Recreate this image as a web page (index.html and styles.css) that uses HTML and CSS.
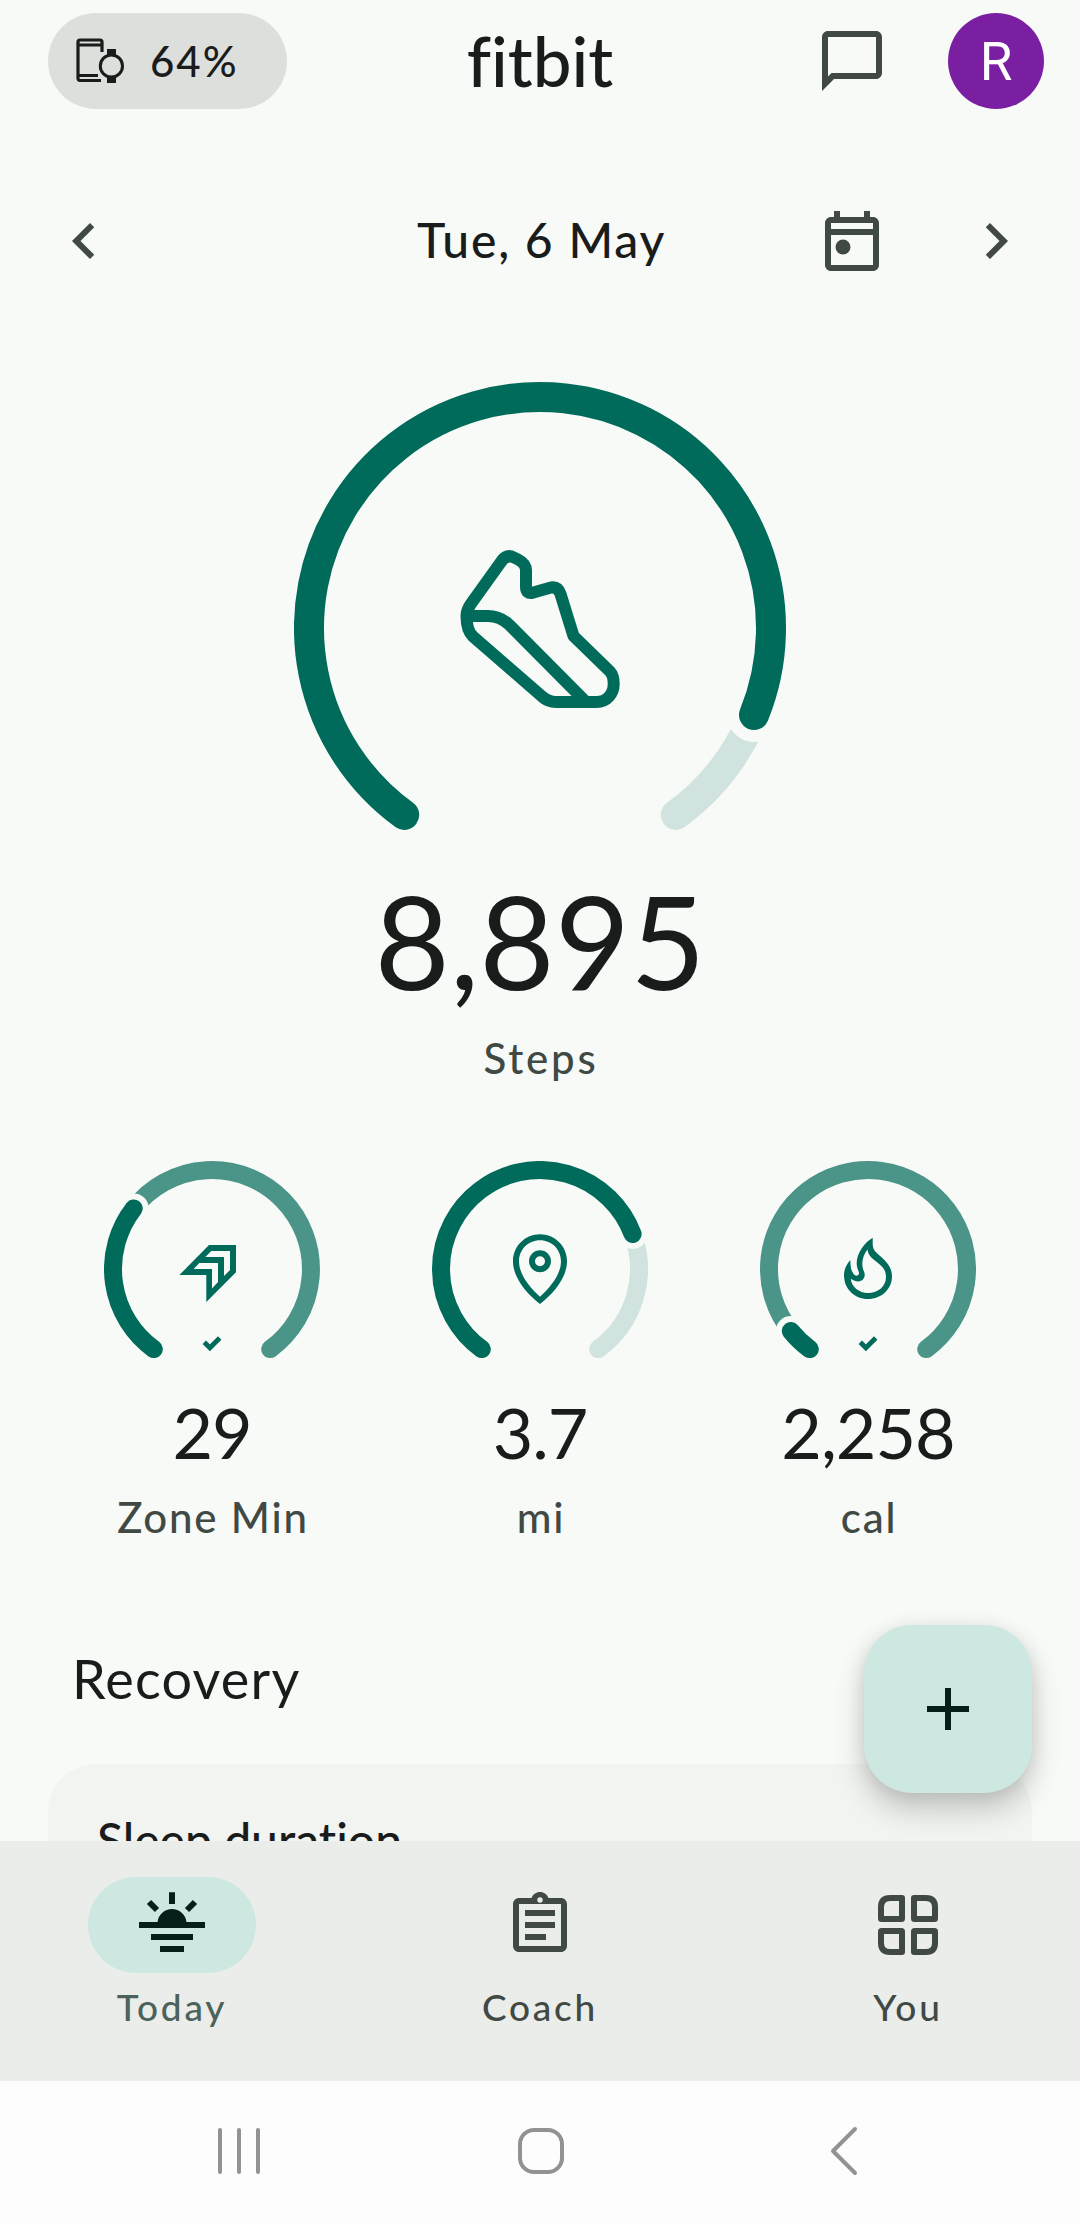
FILE: index.html
```html
<!DOCTYPE html>
<html lang="en">
<head>
    <meta charset="UTF-8">
    <meta name="viewport" content="width=device-width, initial-scale=1.0">
    <title>fitbit - Today</title>
    <link rel="stylesheet" href="styles.css">
</head>
<body>
    <main class="content">
        <header class="header">
            <div class="device">
                <svg class="device-icon" viewBox="0 0 48 48">
                    <path d="M26 15V5q0-2-2-2H4Q2 3 2 5v36q0 2.500 2 2.500h21M2 8h24M2 38.500h20" fill="none" stroke="currentColor" stroke-width="3.200"/>
                    <circle cx="35.400" cy="29" r="11.100" fill="none" stroke="currentColor" stroke-width="3"/>
                    <path d="M31 12h9v6.500h-9zM31 39.500h9V46h-9z"/>
                </svg>
                <span>64%</span>
            </div>
            <h1 class="logo">fitbit</h1>
            <div class="header-actions">
                <svg class="icon" viewBox="0 0 24 24"><path d="M20 2H4c-1.100 0-2 .9-2 2v18l4-4h14c1.100 0 2-.9 2-2V4c0-1.100-.9-2-2-2zm0 14H5.170L4 17.200V4h16z"/></svg>
                <div class="avatar">R</div>
            </div>
        </header>

        <div class="date-bar">
            <svg class="icon" viewBox="0 0 24 24"><path d="M15.410 7.410 14 6l-6 6 6 6 1.410-1.410L10.830 12z"/></svg>
            <span class="date">Tue, 6 May</span>
            <div class="date-actions">
                <svg class="icon" viewBox="0 0 24 24"><path d="M19 4h-1V2h-2v2H8V2H6v2H5c-1.100 0-2 .9-2 2v14c0 1.100.9 2 2 2h14c1.100 0 2-.9 2-2V6c0-1.100-.9-2-2-2zm0 16H5V10h14zm0-12H5V6h14z"/><circle cx="9" cy="14" r="2.500"/></svg>
                <svg class="icon" viewBox="0 0 24 24"><path d="M8.590 16.590 10 18l6-6-6-6-1.410 1.410L13.170 12z"/></svg>
            </div>
        </div>

        <section class="steps">
            <svg class="ring-large" viewBox="-246 -246 492 450">
                <path class="track" d="M214 87A231 231 0 0 1 135.800 186.900"/>
                <circle class="gap" cx="214" cy="87" r="27"/>
                <path class="progress" d="M-135.800 186.900A231 231 0 1 1 214 87"/>
                <path class="shoe" d="M-73.500-12q0-6 4.300-12L-38-67.500q5-6.500 12-3l4 2q8 4 8 11v16.500q0 7 6.500 5.800L11-40.500q7-1 9.500 6.500L33.500 8 70 43.500q3.700 4 3.700 12.500c0 10-7 18-17 18H16q-8 0-14.500-6L-67 8.500q-6.500-6-6.500-20.500ZM-73-12h21q12 0 21.500 9L45 73"/>
            </svg>
            <div class="steps-value">8,895</div>
            <div class="label">Steps</div>
        </section>

        <section class="metrics">
            <div class="metric">
                <svg class="ring" viewBox="-108 -108 216 200">
                    <path class="track done" d="M-78.300-60.600A99 99 0 1 1 58.200 80.100"/>
                    <circle class="gap" cx="-78.300" cy="-60.600" r="15"/>
                    <path class="progress" d="M-58.200 80.100A99 99 0 0 1-78.300-60.600"/>
                    <path class="glyph" fill-rule="evenodd" d="M-32.600 6-3-24h27V3.300L-5.700 33V6zM-6.700-12h18.700V7l6-6v-19H-.7zM-18.300 0H0v19.500L6 13V-6h-18.700z"/>
                    <path class="check" d="M-7.700 73.200-2.100 78.800 7.700 69"/>
                </svg>
                <div class="value">29</div>
                <div class="label">Zone Min</div>
            </div>
            <div class="metric">
                <svg class="ring" viewBox="-108 -108 216 200">
                    <path class="track" d="M92.600-35A99 99 0 0 1 58.200 80.100"/>
                    <circle class="gap" cx="92.600" cy="-35" r="15"/>
                    <path class="progress" d="M-58.200 80.100A99 99 0 1 1 92.600-35"/>
                    <path class="glyph" fill-rule="evenodd" d="M0-34.700c-15 0-27 12-27 27C-27 9-13 25 0 35 13 25 27 9 27-7.700c0-15-12-27-27-27zm0 6c11.700 0 21 9.300 21 21C21 5 11 17.700 0 27.700-11 17.700-21 5-21-7.700c0-11.700 9.300-21 21-21z"/>
                    <circle class="pin-dot" cx="0" cy="-7.800" r="8"/>
                </svg>
                <div class="value">3.7</div>
                <div class="label">mi</div>
            </div>
            <div class="metric">
                <svg class="ring" viewBox="-108 -108 216 200">
                    <path class="track done" d="M-77.200 62A99 99 0 1 1 58.200 80.100"/>
                    <circle class="gap" cx="-77.200" cy="62" r="15"/>
                    <path class="progress" d="M-58.200 80.100A99 99 0 0 1-77.200 62"/>
                    <path class="glyph" fill-rule="evenodd" d="M4.700-31.300C-3-27-11.300-16-11.300-6c0 6 2.500 8 2.300 10.500C-9.300 7-13 8-15 4c-2-3-2.500-6-2.700-13C-22-4-24 1-24 6-24 20-13.500 30-.2 30 13.500 30 24 20 24 7.500 24-3 17-8.500 11.500-13.500 7-17.500 4.700-20 4.700-25zM-.5-19.500C0-14.500 3-11.500 7.500-8 13-3.500 18-.5 18 8c0 9-7.500 16-18 16-9 0-16.500-6-17.200-14.200C-8 16-3.300 10-3.300 6c0-4-2.400-5-2.400-11 0-6 2.200-10.500 5.200-14.500z"/>
                    <path class="check" d="M-7.700 73.200-2.100 78.800 7.700 69"/>
                </svg>
                <div class="value">2,258</div>
                <div class="label">cal</div>
            </div>
        </section>

        <h2 class="section-title">Recovery</h2>
        <div class="card">
            <div class="card-title">Sleep duration</div>
        </div>

        <button class="fab" aria-label="Add">
            <svg class="fab-icon" viewBox="0 0 42 42"><path d="M18 0h6v18h18v6H24v18h-6V24H0v-6h18z"/></svg>
        </button>
    </main>

    <nav class="tabs">
        <a class="tab active">
            <span class="tab-icon">
                <svg class="icon" viewBox="-36 -36 72 72">
                    <path d="M-33-3h18.500a14.600 14.600 0 0 1 29 0H33v6h-66zM-21 9h42v6h-42zM-12 21h24v6h-24zM-3-32.700h6V-21h-6z"/>
                    <path d="M-23-23l8 8M23-23l-8 8" stroke="currentColor" stroke-width="6"/>
                </svg>
            </span>
            <span class="tab-label">Today</span>
        </a>
        <a class="tab">
            <span class="tab-icon">
                <svg class="icon" viewBox="0 0 24 24"><path fill-rule="evenodd" d="M7 15h7v2H7zm0-4h10v2H7zm0-4h10v2H7zm12-4h-4.180C14.400 1.840 13.300 1 12 1s-2.400.84-2.820 2H5c-1.100 0-2 .9-2 2v14c0 1.100.9 2 2 2h14c1.100 0 2-.9 2-2V5c0-1.100-.9-2-2-2zm-7-.25a.9.9 0 0 1 0 1.800.9.900 0 0 1 0-1.800zM19 19H5V5h14z"/></svg>
            </span>
            <span class="tab-label">Coach</span>
        </a>
        <a class="tab">
            <span class="tab-icon">
                <svg class="icon" viewBox="-36 -36 72 72">
                    <g fill="none" stroke="currentColor" stroke-width="6">
                        <path id="leaf" d="M-6-6.500V-27h-12q-9 0-9 9v11.500q0 .5.500.5h20q.5 0 .5-.5z" stroke-linejoin="round"/>
                        <use href="#leaf" transform="scale(-1 1)"/>
                        <use href="#leaf" transform="scale(1 -1)"/>
                        <use href="#leaf" transform="scale(-1 -1)"/>
                    </g>
                </svg>
            </span>
            <span class="tab-label">You</span>
        </a>
    </nav>

    <div class="system-nav">
        <svg class="system-icon" viewBox="-25 -25 50 50"><path d="M-19-21v42M0-21v42M19-21v42"/></svg>
        <svg class="system-icon" viewBox="-25 -25 50 50"><rect x="-21" y="-21" width="42" height="42" rx="14"/></svg>
        <svg class="system-icon" viewBox="-25 -25 50 50"><path d="M12-22-10 0l22 22"/></svg>
    </div>
</body>
</html>
```
FILE: styles.css
```css
* { box-sizing: border-box; }
body {
    margin: 0;
    height: 2225px;
    display: flex;
    flex-direction: column;
    overflow: hidden;
    font-family: Lato, "Open Sans", sans-serif;
    font-variant-ligatures: none;
    background: #f8faf7;
    color: #1a1c1b;
}
h1, h2 { margin: 0; font-weight: 400; }
svg { display: block; flex: none; }
.icon { width: 72px; height: 72px; fill: currentColor; }

.content {
    position: relative;
    height: 1841px;
    flex: none;
    padding-top: 13px;
    overflow: hidden;
}

/* top bar */
.header {
    display: grid;
    grid-template-columns: 408px 168px 1fr;
    align-items: center;
    height: 96px;
    padding: 0 36px 0 48px;
    color: #404944;
}
.device {
    display: flex;
    align-items: center;
    gap: 26px;
    width: 239px;
    height: 96px;
    padding-left: 28px;
    border-radius: 48px;
    background: #dddfdc;
    color: #1a1c1b;
    font-size: 42px;
    font-weight: 500;
    line-height: 48px;
    letter-spacing: 2px;
}
.device-icon { width: 48px; height: 48px; fill: currentColor; }
.logo {
    font-size: 69px;
    font-weight: 500;
    line-height: 96px;
    text-align: center;
    color: #1a1c1b;
}
.header-actions { display: flex; align-items: center; justify-content: flex-end; gap: 60px; }
.avatar {
    width: 96px;
    height: 96px;
    padding-top: 1px;
    border-radius: 50%;
    background: #7b1fa2;
    color: #fff;
    font: 53px/96px Roboto, sans-serif;
    text-align: center;
}

.date-bar {
    display: grid;
    grid-template-columns: 348px 288px 1fr;
    align-items: center;
    height: 72px;
    margin-top: 96px;
    padding: 0 48px;
    color: #404944;
}
.date {
    padding: 0 0 2px 3px;
    font-size: 48px;
    font-weight: 500;
    line-height: 60px;
    letter-spacing: 1.8px;
    text-align: center;
    white-space: nowrap;
    color: #1a1c1b;
}
.date-actions { display: flex; justify-content: flex-end; gap: 72px; }

/* rings */
.steps {
    display: flex;
    flex-direction: column;
    align-items: center;
    margin-top: 105px;
}
.ring-large { width: 492px; height: 450px; stroke-width: 30; }
.ring { width: 216px; height: 200px; stroke-width: 18; }
.track, .progress { fill: none; stroke-linecap: round; }
.track { stroke: #d0e3df; }
.track.done { stroke: #4a9587; }
.progress { stroke: #006b5a; }
.gap { fill: #f8faf7; stroke: none; }
.shoe { fill: none; stroke: #006b5a; stroke-width: 12; stroke-linejoin: round; }
.glyph { fill: #006b5a; stroke: none; }
.pin-dot { fill: none; stroke: #006b5a; stroke-width: 6; }
.check { fill: none; stroke: #006b5a; stroke-width: 4.8; }

.steps-value {
    margin: 42px 0 27px;
    font-size: 130px;
    line-height: 132px;
}
.label {
    padding-left: 2px;
    font-size: 42px;
    font-weight: 500;
    line-height: 50px;
    letter-spacing: 1.8px;
    color: #404944;
}
.steps .label { letter-spacing: 2.8px; }
.metrics {
    display: grid;
    grid-template-columns: repeat(3, 1fr);
    margin-top: 78px;
    padding: 0 48px;
}
.metric { display: flex; flex-direction: column; align-items: center; }
.value { margin: 35px 0 24px; font-size: 70px; line-height: 72px; letter-spacing: -1px; }

.section-title {
    margin: 105px 0 53px;
    padding-left: 72px;
    font-size: 54px;
    line-height: 64px;
    letter-spacing: 1.2px;
}
.card {
    height: 300px;
    margin: 0 48px;
    padding: 48px;
    border-radius: 48px;
    background: #f2f4f1;
}
.card-title { padding-left: 1px; font-size: 48px; font-weight: 500; line-height: 56px; }

.fab {
    position: absolute;
    right: 48px;
    bottom: 48px;
    display: flex;
    align-items: center;
    justify-content: center;
    width: 168px;
    height: 168px;
    border: none;
    border-radius: 48px;
    background: #cde8e0;
    color: #05201a;
    box-shadow: 0 16px 30px rgba(0, 0, 0, .2), 0 2px 18px rgba(0, 0, 0, .08);
}
.fab-icon { width: 42px; height: 42px; fill: currentColor; }

/* bottom navigation */
.tabs {
    display: grid;
    grid-template-columns: repeat(3, 1fr);
    gap: 24px;
    flex: none;
    height: 240px;
    padding-top: 36px;
    background: #ebedea;
    color: #404944;
}
.tab { display: flex; flex-direction: column; align-items: center; gap: 12px; }
.tab-icon {
    display: flex;
    align-items: center;
    justify-content: center;
    width: 168px;
    height: 96px;
    border-radius: 48px;
}
.active .tab-icon { background: #cde8e0; color: #05201a; }
.tab-label {
    font-size: 37px;
    font-weight: 500;
    line-height: 44px;
    letter-spacing: 2.8px;
}
.active .tab-label { color: #4b635b; }

.system-nav {
    display: grid;
    grid-template-columns: repeat(3, 302px);
    place-content: center;
    justify-items: center;
    flex: 1;
    padding: 0 0 4px 2px;
    background: #fdfdfd;
}
.system-icon {
    width: 50px;
    height: 50px;
    fill: none;
    stroke: #929292;
    stroke-width: 4;
    stroke-linecap: round;
    stroke-linejoin: round;
}
```
